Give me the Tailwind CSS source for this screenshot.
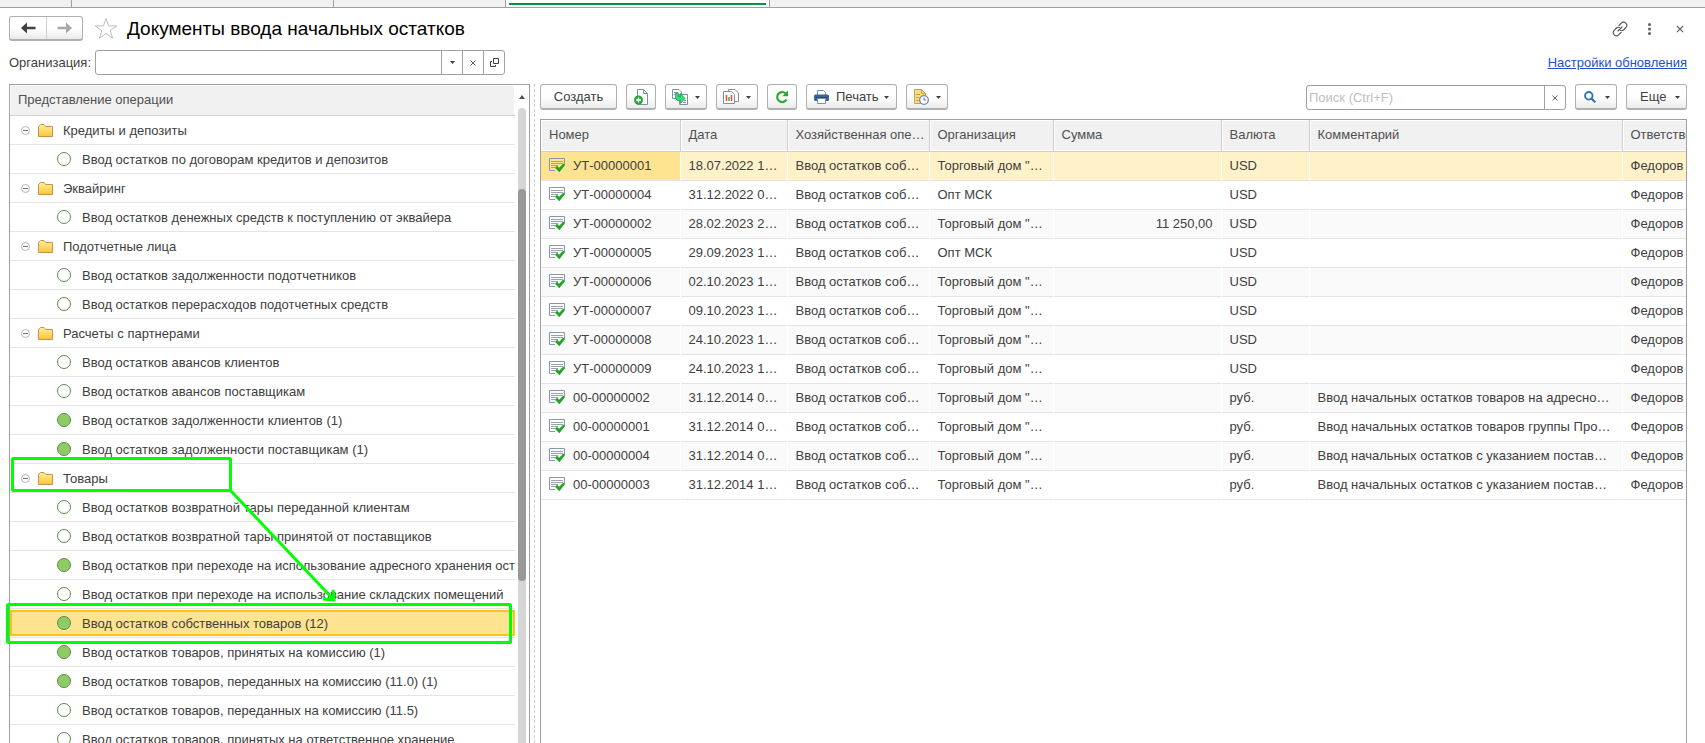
<!DOCTYPE html>
<html lang="ru">
<head>
    <meta charset="UTF-8">
    <meta name="viewport" content="width=device-width, initial-scale=1.0">
    <title>Документы ввода начальных остатков</title>
    <script src="https://cdn.jsdelivr.net/npm/@tailwindcss/browser@4"></script>
</head>
<body class="h-screen overflow-hidden bg-white font-['Liberation_Sans',Arial,sans-serif] text-[13px] leading-4 text-[#404040]">

    <!-- Icons -->
    <svg class="absolute size-0">
        <defs>
            <linearGradient id="folderFill" x1="0" y1="0" x2="0" y2="1">
                <stop offset="0" stop-color="#fff09a"/>
                <stop offset="1" stop-color="#fcc43c"/>
            </linearGradient>
        </defs>
        <symbol id="folder" viewBox="0 0 15 13">
            <path d="M.5 12.500V2.500L2.500 .500H6L7.500 2.500H14.500V12.500Z" fill="url(#folderFill)" stroke="#c8924a"/>
        </symbol>
        <symbol id="minus" viewBox="0 0 9 9">
            <circle cx="4.500" cy="4.500" r="4" fill="#fff" stroke="#b4b4b4"/>
            <path d="M2 4.500H7" stroke="#707070"/>
        </symbol>
        <symbol id="caret" viewBox="0 0 5 3">
            <path d="M0 0H5L2.500 3Z" fill="#404040"/>
        </symbol>
        <symbol id="cross" viewBox="0 0 8 8">
            <path d="M1.500 1.500L6.500 6.500M6.500 1.500L1.500 6.500" stroke="#606060"/>
        </symbol>
        <symbol id="doc" viewBox="0 0 16 15">
            <path d="M.5 12.500V.5H15.500V7M.5 12.500H6" fill="none" stroke="#8798ab"/>
            <path d="M2 3.500H14M2 5.500H14M2 7.500H9M2 9.500H6" stroke="#9aa3ad"/>
            <path d="M6 9.700L8 7.700L10.200 9.800L14.300 5.500L16 7.300L10.300 14.200Z" fill="#22a52a"/>
        </symbol>
    </svg>

    <div class="flex h-full flex-col">
        <!-- Window tabs -->
        <div class="flex h-2 shrink-0 border-b border-[#a0a0a0] bg-[#f1f1f1]">
            <div class="w-18 border-r border-[#a0a0a0]"></div>
            <div class="w-[262px] border-r border-[#a0a0a0]"></div>
            <div class="w-[172px] border-r border-[#a0a0a0]"></div>
            <div class="w-[264px] border-r border-[#a0a0a0] bg-white px-[3px] pt-[3px]">
                <div class="h-0.5 bg-[#009646]"></div>
            </div>
        </div>

        <!-- Title bar -->
        <header class="flex h-[42px] shrink-0 items-center pt-[1px] pr-[18px] pb-[2px] pl-[9px]">
            <div class="flex h-[25px] overflow-hidden rounded-[3px] border border-b-2 border-[#b0b0b0] bg-linear-to-b from-white from-50% to-[#ebebeb]">
                <button class="flex w-9 items-center justify-center" aria-label="Назад">
                    <svg class="h-3 w-[15px]" viewBox="0 0 15 12"><path d="M0 6L6 .5V4.700H14.500V7.300H6V11.500Z" fill="#404040"/></svg>
                </button>
                <button class="flex w-9 items-center justify-center border-l border-[#cfcfcf]" aria-label="Вперед">
                    <svg class="h-3 w-[15px]" viewBox="0 0 15 12"><path d="M15 6L9 .5V4.700H.5V7.300H9V11.500Z" fill="#a8a8a8"/></svg>
                </button>
            </div>
            <button class="ml-[11px]" aria-label="В избранное">
                <svg class="h-[23px] w-6" viewBox="0 0 24 23"><path d="M12 1.500L14.600 8.900H22.800L16.200 13.500L18.600 21.300L12 16.600L5.400 21.300L7.800 13.500L1.200 8.900H9.400Z" fill="#fff" stroke="#b9bec4"/></svg>
            </button>
            <h1 class="ml-[9px] text-[19px] leading-6 text-black">Документы ввода начальных остатков</h1>
            <div class="ml-auto flex items-center">
                <button aria-label="Ссылка">
                    <svg class="size-4" viewBox="0 0 16 16" fill="none" stroke="#505050" stroke-width="1.100" stroke-linecap="round"><path d="M7 4.500L9.300 2.200A3 3 0 0 1 13.800 6.600L11.500 9A3 3 0 0 1 8.600 9.500M9 11.500L6.700 13.800A3 3 0 0 1 2.200 9.400L4.500 7A3 3 0 0 1 7.400 6.500M6 10L10 6"/></svg>
                </button>
                <button class="ml-5" aria-label="Меню">
                    <svg class="h-3 w-[3px]" viewBox="0 0 3 12" fill="#606060"><circle cx="1.500" cy="1.500" r="1.500"/><circle cx="1.500" cy="6" r="1.500"/><circle cx="1.500" cy="10.500" r="1.500"/></svg>
                </button>
                <button class="mr-[2px] ml-[24px]" aria-label="Закрыть"><svg class="size-[10px]"><use href="#cross"/></svg></button>
            </div>
        </header>

        <!-- Organization filter -->
        <div class="flex h-[34px] shrink-0 items-start pr-[18px] pl-[9px]">
            <label for="org" class="w-[86px] pt-[5px]">Организация:</label>
            <div class="flex h-[25px] w-[410px] rounded-[3px] border border-[#a0a0a0] bg-white">
                <input id="org" type="text" class="min-w-0 flex-1 px-1 outline-none">
                <button class="flex w-[21px] items-center justify-center border-l border-[#a0a0a0]" aria-label="Выбрать"><svg class="h-[3px] w-[5px]"><use href="#caret"/></svg></button>
                <button class="flex w-[21px] items-center justify-center border-l border-[#a0a0a0]" aria-label="Очистить"><svg class="size-2"><use href="#cross"/></svg></button>
                <button class="flex w-[21px] items-center justify-center border-l border-[#a0a0a0]" aria-label="Открыть">
                    <svg class="size-[9px]" viewBox="0 0 9 9" fill="none" stroke="#404040"><path d="M3.500.5H8.500V5.500H3.500ZM2 3.500H.5V8.500H5.500V7"/></svg>
                </button>
            </div>
            <a href="#" class="ml-auto pt-[5px] text-[#1f50c8] underline">Настройки обновления</a>
        </div>

        <main class="flex min-h-0 flex-1 pl-[9px]">
            <!-- Operations tree -->
            <section class="flex w-[521px] shrink-0 overflow-hidden border-x border-t border-[#a0a0a0]">
                <div class="min-w-0 flex-1">
                    <div class="px-px pt-px">
                        <h2 class="h-[29px] bg-[#f1f1f1] px-[7px] pt-[6px] text-[#505050]">Представление операции</h2>
                    </div>
                    <ul id="tree" class="border-t border-[#cfcfcf]"></ul>
                </div>
                <div class="flex w-[14px] flex-col items-center">
                    <svg class="mt-[10px] mb-[9px] h-1 w-[6px] shrink-0" viewBox="0 0 6 4"><path d="M0 4H6L3 0Z" fill="#505050"/></svg>
                    <div class="w-2 flex-1 rounded-t bg-[#d6d6d6] pt-[81px]">
                        <div class="h-[392px] rounded bg-[#989898]"></div>
                    </div>
                </div>
            </section>
            <div class="ml-1 w-[6px] shrink-0 border-l border-dashed border-[#cfcfcf]"></div>

            <!-- Documents list -->
            <section class="flex min-w-0 flex-1 flex-col pr-[18px]">
                <div class="flex h-[35px] shrink-0 items-start gap-[9px]">
                    <button class="h-[26px] w-[77px] rounded-[3px] border border-b-2 border-[#b0b0b0] bg-linear-to-b from-white from-50% to-[#ebebeb]">Создать</button>
                    <button class="flex h-[26px] w-[30px] items-center justify-center rounded-[3px] border border-b-2 border-[#b0b0b0] bg-linear-to-b from-white from-50% to-[#ebebeb]" aria-label="Скопировать">
                        <svg class="size-4" viewBox="0 0 16 16"><path d="M4.500.5H10.500L14.500 4.500V15.500H4.500Z" fill="#fff" stroke="#7d90a3"/><path d="M10.500.5V4.500H14.500" fill="none" stroke="#7d90a3"/><circle cx="5.500" cy="11" r="4.500" fill="#2aa33a"/><path d="M5.500 8.500V13.500M3 11H8" stroke="#fff" stroke-width="1.400"/></svg>
                    </button>
                    <button class="flex h-[26px] w-[42px] items-center gap-[7px] rounded-[3px] border border-b-2 border-[#b0b0b0] bg-linear-to-b from-white from-50% to-[#ebebeb] pl-[6px]" aria-label="Создать на основании">
                        <svg class="size-4" viewBox="0 0 16 16"><path d="M.5.500H7L9.500 3V9.500H.5Z" fill="#fff" stroke="#7d90a3"/><path d="M2 3.500H6M2 5.500H5" stroke="#7d90a3"/><path d="M7.500 5.500H15.500V15.500H7.500Z" fill="#fff" stroke="#7d90a3"/><path d="M11 13.500H14M12 11.500H14" stroke="#7d90a3"/><path d="M3.500 4.500H6.500V7.500H8.500V4.500L13 9.500L8.500 14.500V11.500H5.500L3.500 9.500Z" fill="#2be07c" stroke="#129a48" stroke-width=".7"/></svg>
                        <svg class="mt-[2px] h-[3px] w-[5px]"><use href="#caret"/></svg>
                    </button>
                    <button class="flex h-[26px] w-[42px] items-center gap-[7px] rounded-[3px] border border-b-2 border-[#b0b0b0] bg-linear-to-b from-white from-50% to-[#ebebeb] pl-[6px]" aria-label="Отчеты">
                        <svg class="size-4" viewBox="0 0 16 16"><path d="M5.500.5H12L15.500 4V12.500H5.500Z" fill="#fff" stroke="#7d90a3"/><path d="M.5 2.500H8.500L11.500 5.500V14.500H.5Z" fill="#fff" stroke="#7d90a3"/><path d="M3.500 6V12" stroke="#e04a3a" stroke-width="1.500"/><path d="M6 8V12" stroke="#3cae3f" stroke-width="1.500"/><path d="M8.500 6V12" stroke="#e04a3a" stroke-width="1.500"/></svg>
                        <svg class="mt-[2px] h-[3px] w-[5px]"><use href="#caret"/></svg>
                    </button>
                    <button class="flex h-[26px] w-[30px] items-center justify-center rounded-[3px] border border-b-2 border-[#b0b0b0] bg-linear-to-b from-white from-50% to-[#ebebeb]" aria-label="Обновить">
                        <svg class="size-[14px]" viewBox="0 0 14 14"><path d="M11.500 9.500A5 5 0 1 1 10.500 3.300" fill="none" stroke="#2fa62f" stroke-width="2.200"/><path d="M13 .5V6.200H7.300Z" fill="#2fa62f"/></svg>
                    </button>
                    <button class="flex h-[26px] w-[91px] items-center rounded-[3px] border border-b-2 border-[#b0b0b0] bg-linear-to-b from-white from-50% to-[#ebebeb] pl-[7px]">
                        <svg class="h-[14px] w-[15px]" viewBox="0 0 15 14"><path d="M3.500 5V.5H9.500L11.500 2.500V5" fill="#fff" stroke="#7d90a3"/><rect y="4.500" width="15" height="6.500" rx="1.500" fill="#3a658f"/><path d="M2 7.500H13" stroke="#1d4468" stroke-width=".8"/><path d="M3.500 8.500H11.500V13.500H3.500Z" fill="#fff" stroke="#7d90a3"/></svg>
                        <span class="ml-[7px]">Печать</span>
                        <svg class="mt-[2px] mr-[7px] ml-auto h-[3px] w-[5px]"><use href="#caret"/></svg>
                    </button>
                    <button class="flex h-[26px] w-[42px] items-center gap-[7px] rounded-[3px] border border-b-2 border-[#b0b0b0] bg-linear-to-b from-white from-50% to-[#ebebeb] pl-[6px]" aria-label="Напоминания">
                        <svg class="size-4" viewBox="0 0 16 16"><path d="M1.500.5H8.500L12.500 4.500V14.500H1.500Z" fill="#f8dc84" stroke="#c9a24a"/><path d="M8.500.5V4.500H12.500M3 5.500H7M3 8.500H6M3 11.500H6" fill="none" stroke="#c9a24a"/><circle cx="11" cy="11" r="4.300" fill="#fff" stroke="#5d8fc4" stroke-width="1.300"/><path d="M11 8.500V11H13" fill="none" stroke="#d84a3a"/></svg>
                        <svg class="mt-[2px] h-[3px] w-[5px]"><use href="#caret"/></svg>
                    </button>

                    <div class="mt-px ml-auto flex h-[25px] w-[260px] rounded-[3px] border border-[#a0a0a0] bg-white">
                        <input type="text" aria-label="Поиск" placeholder="Поиск (Ctrl+F)" class="min-w-0 flex-1 px-[2px] outline-none placeholder:text-[#c0c0c0]">
                        <button class="flex w-[21px] items-center justify-center border-l border-[#a0a0a0]" aria-label="Очистить поиск"><svg class="size-2"><use href="#cross"/></svg></button>
                    </div>
                    <button class="flex h-[26px] w-[42px] items-center rounded-[3px] border border-b-2 border-[#b0b0b0] bg-linear-to-b from-white from-50% to-[#ebebeb] pl-2" aria-label="Найти">
                        <svg class="size-3" viewBox="0 0 12 12" fill="none" stroke="#2f74ad"><circle cx="4.800" cy="4.800" r="3.800" stroke-width="1.800"/><path d="M7.500 7.500L11.300 11.300" stroke-width="2.200"/></svg>
                        <svg class="mt-[2px] ml-[9px] h-[3px] w-[5px]"><use href="#caret"/></svg>
                    </button>
                    <button class="flex h-[26px] w-[61px] items-center rounded-[3px] border border-b-2 border-[#b0b0b0] bg-linear-to-b from-white from-50% to-[#ebebeb] pl-[13px]">Еще
                        <svg class="mt-[2px] mr-[6px] ml-auto h-[3px] w-[5px]"><use href="#caret"/></svg>
                    </button>
                </div>

                <div class="min-h-0 flex-1 overflow-hidden border-x border-t border-[#a0a0a0]">
                    <table class="w-full table-fixed border-collapse text-left">
                        <colgroup>
                            <col class="w-[139px]"><col class="w-[107px]"><col class="w-[142px]"><col class="w-[124px]">
                            <col class="w-[168px]"><col class="w-[88px]"><col><col class="w-16">
                        </colgroup>
                        <thead>
                            <tr id="head" class="h-[31px] border-b border-[#cfcfcf] bg-[#f1f1f1] text-[#505050]"></tr>
                        </thead>
                        <tbody id="docs"></tbody>
                    </table>
                </div>
            </section>
        </main>
    </div>

    <!-- Highlight marks over the tree -->
    <svg class="pointer-events-none absolute top-0 left-0 h-[743px] w-[540px]" viewBox="0 0 540 743" fill="none" stroke="#00ff00" stroke-width="3">
        <rect x="12.500" y="458.500" width="218" height="32" rx="1"/>
        <rect x="7.500" y="604.500" width="503" height="38" rx="1"/>
        <path d="M231 491L333 599"/>
        <path d="M333 590L334 600L323 599" stroke-linejoin="round"/>
    </svg>

    <script>
        // state: 'group' - folder, 0 - empty, 1 - filled, 2 - current row
        const operations = [
            ['group', 'Кредиты и депозиты'],
            [0, 'Ввод остатков по договорам кредитов и депозитов'],
            ['group', 'Эквайринг'],
            [0, 'Ввод остатков денежных средств к поступлению от эквайера'],
            ['group', 'Подотчетные лица'],
            [0, 'Ввод остатков задолженности подотчетников'],
            [0, 'Ввод остатков перерасходов подотчетных средств'],
            ['group', 'Расчеты с партнерами'],
            [0, 'Ввод остатков авансов клиентов'],
            [0, 'Ввод остатков авансов поставщикам'],
            [1, 'Ввод остатков задолженности клиентов (1)'],
            [1, 'Ввод остатков задолженности поставщикам (1)'],
            ['group', 'Товары'],
            [0, 'Ввод остатков возвратной тары переданной клиентам'],
            [0, 'Ввод остатков возвратной тары принятой от поставщиков'],
            [1, 'Ввод остатков при переходе на использование адресного хранения ост'],
            [0, 'Ввод остатков при переходе на использование складских помещений'],
            [2, 'Ввод остатков собственных товаров (12)'],
            [1, 'Ввод остатков товаров, принятых на комиссию (1)'],
            [1, 'Ввод остатков товаров, переданных на комиссию (11.0) (1)'],
            [0, 'Ввод остатков товаров, переданных на комиссию (11.5)'],
            [0, 'Ввод остатков товаров, принятых на ответственное хранение']
        ];

        document.getElementById('tree').innerHTML = operations.map(([state, name]) => {
            if (state === 'group') {
                return `<li class="flex h-[29px] items-center border-b border-[#e4e4e4] pl-[11px]">
                    <svg class="size-[9px] shrink-0"><use href="#minus"/></svg>
                    <svg class="ml-2 h-[13px] w-[15px] shrink-0"><use href="#folder"/></svg>
                    <span class="ml-[10px] pt-0.5">${name}</span></li>`;
            }
            const dot = state ? 'bg-[#8fcc66] border-[#5a8c46]' : 'bg-white border-[#5a8c46]';
            const row = state === 2 ? 'border-2 border-[#fcc419] bg-[#fee391] pl-[45px]' : 'pl-[47px]';
            return `<li class="h-[29px] border-b border-[#e4e4e4] py-px">
                <div class="flex h-[26px] items-center overflow-hidden whitespace-nowrap ${row}">
                    <span class="size-[14px] shrink-0 rounded-full border ${dot}"></span>
                    <span class="ml-[11px] pt-0.5">${name}</span>
                </div></li>`;
        }).join('');

        const columns = ['Номер', 'Дата', 'Хозяйственная опе…', 'Организация', 'Сумма', 'Валюта', 'Комментарий', 'Ответственный'];

        document.getElementById('head').innerHTML = columns.map(name =>
            `<th class="overflow-hidden border-r border-[#cfcfcf] pl-2 font-normal whitespace-nowrap shadow-[inset_1px_1px_0_#fff,inset_0_-1px_0_#fff] last:border-r-0">${name}</th>`
        ).join('');

        const home = 'Торговый дом "…';
        const docs = [
            ['УТ-00000001', '18.07.2022 1…', home, '', 'USD', ''],
            ['УТ-00000004', '31.12.2022 0…', 'Опт МСК', '', 'USD', ''],
            ['УТ-00000002', '28.02.2023 2…', home, '11 250,00', 'USD', ''],
            ['УТ-00000005', '29.09.2023 1…', 'Опт МСК', '', 'USD', ''],
            ['УТ-00000006', '02.10.2023 1…', home, '', 'USD', ''],
            ['УТ-00000007', '09.10.2023 1…', home, '', 'USD', ''],
            ['УТ-00000008', '24.10.2023 1…', home, '', 'USD', ''],
            ['УТ-00000009', '24.10.2023 1…', home, '', 'USD', ''],
            ['00-00000002', '31.12.2014 0…', home, '', 'руб.', 'Ввод начальных остатков товаров на адресно…'],
            ['00-00000001', '31.12.2014 0…', home, '', 'руб.', 'Ввод начальных остатков товаров группы Про…'],
            ['00-00000004', '31.12.2014 0…', home, '', 'руб.', 'Ввод начальных остатков с указанием постав…'],
            ['00-00000003', '31.12.2014 1…', home, '', 'руб.', 'Ввод начальных остатков с указанием постав…']
        ];

        document.getElementById('docs').innerHTML = docs.map(([number, date, org, sum, currency, comment], i) => {
            const current = i === 0;
            const cell = 'overflow-hidden whitespace-nowrap pl-2 border-r last:border-r-0 ' + (current ? 'border-r-white' : 'border-r-transparent');
            const row = current ? 'bg-[#fff2c8]' : i % 2 ? 'bg-white' : 'bg-[#fafafa]';
            return `<tr class="h-[29px] border-b border-b-[#e4e4e4] ${row}">
                <td class="${cell} ${current ? 'bg-[#fee391]' : ''}"><div class="flex items-center gap-2"><svg class="h-[15px] w-4"><use href="#doc"/></svg>${number}</div></td>
                <td class="${cell}">${date}</td>
                <td class="${cell}">Ввод остатков соб…</td>
                <td class="${cell}">${org}</td>
                <td class="${cell} pr-2 text-right">${sum}</td>
                <td class="${cell}">${currency}</td>
                <td class="${cell}">${comment}</td>
                <td class="overflow-hidden pl-2 whitespace-nowrap">Федоров</td>
            </tr>`;
        }).join('');
    </script>
</body>
</html>
